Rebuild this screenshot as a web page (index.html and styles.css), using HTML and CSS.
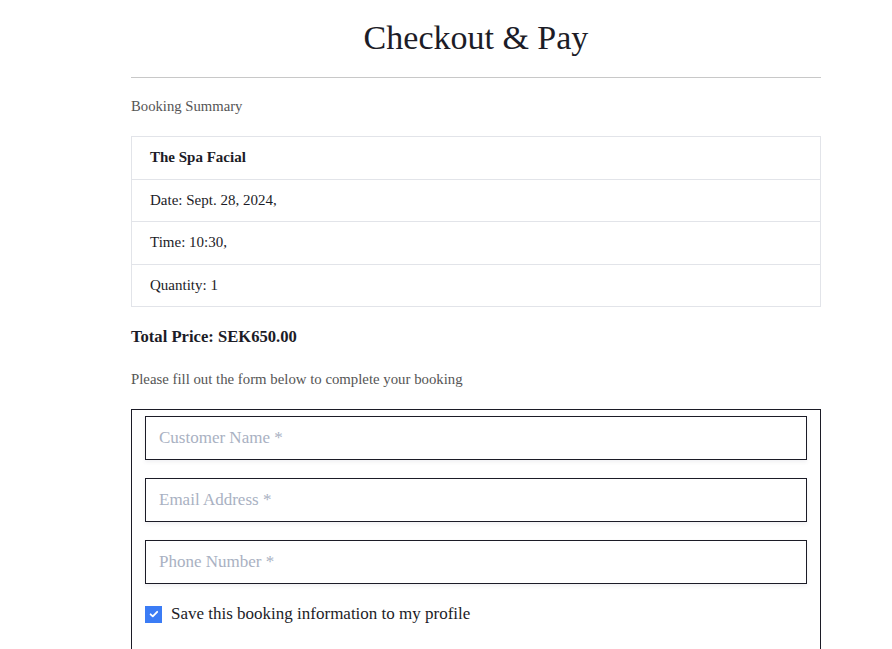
FILE: index.html
```html
<!DOCTYPE html>
<html lang="en">
<head>
<meta charset="utf-8">
<title>Checkout &amp; Pay</title>
<link rel="stylesheet" href="styles.css">
</head>
<body>
<main class="page">
  <h1 class="title">Checkout &amp; Pay</h1>
  <hr class="rule">
  <p class="muted summary-label">Booking Summary</p>
  <ul class="summary">
    <li class="summary-item strong">The Spa Facial</li>
    <li class="summary-item">Date: Sept. 28, 2024,</li>
    <li class="summary-item">Time: 10:30,</li>
    <li class="summary-item">Quantity: 1</li>
  </ul>
  <p class="total">Total Price: SEK650.00</p>
  <p class="muted intro">Please fill out the form below to complete your booking</p>
  <form class="form">
    <input class="field" type="text" placeholder="Customer Name *" autofocus>
    <input class="field" type="email" placeholder="Email Address *">
    <input class="field" type="tel" placeholder="Phone Number *">
    <label class="check">
      <span class="box"><svg viewBox="0 0 16 16" width="16" height="16"><path d="M4.6 8.3l2.2 2.1 4.4-4.6" fill="none" stroke="#fff" stroke-width="1.8" stroke-linecap="round" stroke-linejoin="round"/></svg></span>
      <span class="check-text">Save this booking information to my profile</span>
    </label>
  </form>
</main>
</body>
</html>
```
FILE: styles.css
```css
* { box-sizing: border-box; }
html, body { margin: 0; padding: 0; background: #fff; }
body {
  font-family: "Liberation Serif", "Times New Roman", serif;
  color: #1c1c27;
}
.page {
  width: 690px;
  margin: 0 0 0 131px;
  display: flex;
  flex-direction: column;
}
.title {
  margin: 16px 0 0;
  font-size: 34px;
  font-weight: 400;
  line-height: 44px;
  text-align: center;
}
.rule {
  margin: 17px 0 0;
  border: 0;
  border-top: 1px solid #c8c8c8;
  height: 0;
}
.muted { color: #555; }
.summary-label {
  margin: 18px 0 0;
  font-size: 14.7px;
  line-height: 20px;
}
.summary {
  list-style: none;
  margin: 20px 0 0;
  padding: 0;
  border: 1px solid #e2e4e9;
}
.summary-item {
  height: 42.6px;
  padding: 0 18px;
  display: flex;
  align-items: center;
  font-size: 15px;
  border-top: 1px solid #e2e4e9;
}
.summary-item:first-child { border-top: 0; height: 41.6px; }
.strong { font-weight: 700; }
.total {
  margin: 19px 0 0;
  font-size: 16.6px;
  font-weight: 700;
  line-height: 22px;
}
.intro {
  margin: 20px 0 0;
  font-size: 14.8px;
  line-height: 22px;
}
.form {
  margin: 19px 0 0;
  border: 1px solid #1c1c27;
  padding: 6px 13px 60px;
  display: flex;
  flex-direction: column;
  gap: 18px;
}
.field {
  height: 44px;
  width: 100%;
  border: 1.5px solid #1c1c27;
  border-radius: 0;
  padding: 0 13px;
  font-family: inherit;
  font-size: 17px;
  color: #1c1c27;
  background: #fff;
  box-shadow: 0 2px 4px rgba(60, 66, 87, 0.08);
  outline: none;
  caret-color: #1c1c27;
}
.field::placeholder { color: #a9b1c2; }
.check {
  display: flex;
  align-items: center;
  gap: 9px;
  margin-top: 2px;
  font-size: 17px;
}
.box {
  width: 17px;
  height: 17px;
  background: #3b7cf5;
  display: flex;
  align-items: center;
  justify-content: center;
}
.box svg { display: block; }
```
